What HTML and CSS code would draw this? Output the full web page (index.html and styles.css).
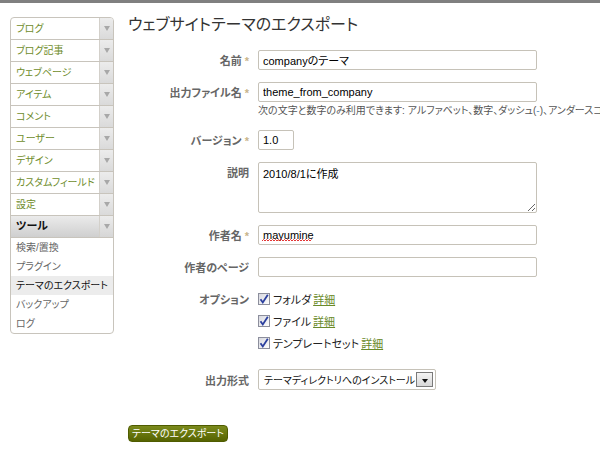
FILE: index.html
```html
<!DOCTYPE html>
<html lang="ja">
<head>
<meta charset="utf-8">
<title>ウェブサイトテーマのエクスポート</title>
<link rel="stylesheet" href="styles.css">
</head>
<body>
<div class="topbar"></div>
<div class="layout">
  <nav class="sidebar">
    <div class="nav-item"><span class="nav-label">ブログ</span><span class="nav-arrow"><i></i></span></div>
    <div class="nav-item"><span class="nav-label">ブログ記事</span><span class="nav-arrow"><i></i></span></div>
    <div class="nav-item"><span class="nav-label">ウェブページ</span><span class="nav-arrow"><i></i></span></div>
    <div class="nav-item"><span class="nav-label">アイテム</span><span class="nav-arrow"><i></i></span></div>
    <div class="nav-item"><span class="nav-label">コメント</span><span class="nav-arrow"><i></i></span></div>
    <div class="nav-item"><span class="nav-label">ユーザー</span><span class="nav-arrow"><i></i></span></div>
    <div class="nav-item"><span class="nav-label">デザイン</span><span class="nav-arrow"><i></i></span></div>
    <div class="nav-item"><span class="nav-label">カスタムフィールド</span><span class="nav-arrow"><i></i></span></div>
    <div class="nav-item"><span class="nav-label">設定</span><span class="nav-arrow"><i></i></span></div>
    <div class="nav-item active"><span class="nav-label">ツール</span><span class="nav-arrow"><i></i></span></div>
    <ul class="subnav">
      <li>検索/置換</li>
      <li>プラグイン</li>
      <li class="current">テーマのエクスポート</li>
      <li>バックアップ</li>
      <li>ログ</li>
    </ul>
  </nav>
  <main class="main">
    <h1 class="title">ウェブサイトテーマのエクスポート</h1>
    <form class="form">
      <div class="row">
        <label class="label">名前 <span class="req">*</span></label>
        <input class="field" type="text" value="companyのテーマ">
      </div>
      <div class="row">
        <label class="label">出力ファイル名 <span class="req">*</span></label>
        <input class="field" type="text" value="theme_from_company">
      </div>
      <div class="hint">次の文字と数字のみ利用できます: アルファベット、数字、ダッシュ(<span class="dash">-</span>)、アンダースコア(_)</div>
      <div class="row">
        <label class="label">バージョン <span class="req">*</span></label>
        <input class="field short" type="text" value="1.0">
      </div>
      <div class="row top">
        <label class="label pad">説明</label>
        <textarea class="field area">2010/8/1に作成</textarea>
      </div>
      <div class="row">
        <label class="label">作者名 <span class="req">*</span></label>
        <div class="field-wrap">
          <input class="field" type="text" value="mayumine">
          <svg class="spell-mark" width="50" height="3" viewBox="0 0 50 3"><polyline points="0,2 1.5,0.5 3,2 4.5,0.5 6,2 7.5,0.5 9,2 10.5,0.5 12,2 13.5,0.5 15,2 16.5,0.5 18,2 19.5,0.5 21,2 22.5,0.5 24,2 25.5,0.5 27,2 28.5,0.5 30,2 31.5,0.5 33,2 34.5,0.5 36,2 37.5,0.5 39,2 40.5,0.5 42,2 43.5,0.5 45,2 46.5,0.5 48,2 49.5,0.5" fill="none" stroke="#e02020" stroke-width="0.9"/></svg>
        </div>
      </div>
      <div class="row">
        <label class="label">作者のページ</label>
        <input class="field" type="text" value="">
      </div>
      <div class="row top">
        <label class="label optlabel">オプション</label>
        <div class="options">
          <div class="opt"><span class="cb"><svg viewBox="0 0 12 12" width="12" height="12"><path d="M2.5 6.2 L4.8 9.5 L9.8 1.8" fill="none" stroke="#2b3f9e" stroke-width="1.8"/></svg></span>フォルダ <a href="#" class="link">詳細</a></div>
          <div class="opt"><span class="cb"><svg viewBox="0 0 12 12" width="12" height="12"><path d="M2.5 6.2 L4.8 9.5 L9.8 1.8" fill="none" stroke="#2b3f9e" stroke-width="1.8"/></svg></span>ファイル <a href="#" class="link">詳細</a></div>
          <div class="opt"><span class="cb"><svg viewBox="0 0 12 12" width="12" height="12"><path d="M2.5 6.2 L4.8 9.5 L9.8 1.8" fill="none" stroke="#2b3f9e" stroke-width="1.8"/></svg></span>テンプレートセット <a href="#" class="link">詳細</a></div>
        </div>
      </div>
      <div class="row">
        <label class="label">出力形式</label>
        <div class="select"><span class="select-text">テーマディレクトリへのインストール</span><span class="select-btn"><i></i></span></div>
      </div>
      <div class="actions">
        <button type="button" class="btn">テーマのエクスポート</button>
      </div>
    </form>
  </main>
</div>
</body>
</html>
```
FILE: styles.css
```css
* { box-sizing: border-box; }
html, body { margin: 0; padding: 0; background: #fff; }
body {
  font-family: "Liberation Sans", "Noto Sans CJK JP", sans-serif;
  font-size: 11px;
  color: #333;
  font-feature-settings: "palt";
  overflow: hidden;
  width: 600px;
  height: 450px;
}
.topbar { height: 3px; background: #808080; }
.layout { display: flex; align-items: flex-start; padding-left: 10px; }

.sidebar {
  width: 104px;
  margin-top: 14px;
  border: 1px solid #c8c4bc;
  border-radius: 4px;
  overflow: hidden;
  flex: none;
}
.nav-item {
  display: flex;
  height: 22px;
  border-bottom: 1px solid #c8c4bc;
}
.nav-label {
  flex: 1;
  padding-left: 5px;
  line-height: 21px;
  color: #6f8d2c;
  font-size: 10px;
  white-space: nowrap;
  overflow: hidden;
}
.nav-arrow {
  width: 14px;
  flex: none;
  background: linear-gradient(#ececec, #dadada);
  border-left: 1px solid #d3d0ca;
  display: flex;
  align-items: center;
  justify-content: center;
}
.nav-arrow i {
  width: 0; height: 0;
  border-left: 3px solid transparent;
  border-right: 3px solid transparent;
  border-top: 5px solid #a8a8a8;
}
.nav-item.active { background: linear-gradient(#ebebeb, #cfcfcf); }
.nav-item.active .nav-label { color: #111; font-weight: bold; font-size: 11px; }
.nav-item.active .nav-arrow { background: linear-gradient(#ececec, #d6d6d6); }
.subnav { list-style: none; margin: 0; padding: 0; }
.subnav li {
  height: 19px;
  line-height: 19px;
  padding-left: 5px;
  color: #666;
  font-size: 10px;
  white-space: nowrap;
}
.subnav li.current { background: #ececec; color: #111; }

.main { margin-left: 14px; padding-top: 12px; flex: 1; min-width: 0; }
.title {
  margin: 0;
  font-size: 16px;
  line-height: 20px;
  font-weight: normal;
  color: #333;
}
.form { margin-top: 15px; display: flex; flex-direction: column; }
.row {
  display: grid;
  grid-template-columns: 121px 279px;
  column-gap: 9px;
  align-items: center;
  margin-bottom: 12px;
}
.row.top { align-items: start; }
.label {
  text-align: right;
  font-weight: bold;
  color: #666;
  font-size: 11px;
  white-space: nowrap;
}
.label.pad { padding-top: 2px; }
.label.optlabel { padding-top: 2px; }
.req { color: #c8b48a; font-weight: bold; }
.field {
  height: 20px;
  border: 1px solid #c6c2b8;
  border-radius: 2px;
  padding: 0 4px;
  font-family: "Liberation Sans", "Noto Sans CJK JP", sans-serif;
  font-size: 11px;
  color: #000;
  background: #fff;
  margin: 0;
  width: 279px;
  outline: none;
  font-feature-settings: "palt";
}
.field.short { width: 36px; }
.field.area { height: 51px; padding: 4px; resize: vertical; line-height: 14px; display: block; }
.field-wrap { position: relative; height: 20px; }
.field-wrap .field { display: block; }
.spell-mark { position: absolute; left: 4px; top: 14px; }
.hint {
  margin: -11px 0 12px 130px;
  line-height: 15px;
  color: #555;
  font-size: 10px;
  white-space: nowrap;
}
.dash { color: #5a8fc0; }
.options { display: flex; flex-direction: column; gap: 2px; margin-bottom: 4px; }
.opt { height: 20px; display: flex; align-items: center; font-size: 11px; color: #222; white-space: nowrap; }
.cb {
  width: 12px; height: 12px;
  border: 1px solid #8c8e9c;
  background: linear-gradient(135deg, #d8d9e0, #fdfdfd);
  margin-right: 3px;
  display: inline-flex;
  flex: none;
}
.cb svg { display: block; margin: -1px; }
.link { color: #6a8a2a; text-decoration: underline; margin-left: 2px; }
.select {
  width: 178px;
  height: 21px;
  border: 1px solid #c6c2b8;
  border-radius: 2px;
  display: flex;
  align-items: center;
  justify-content: space-between;
  padding: 0 2px 0 5px;
  color: #111;
  font-size: 10px;
}
.select-text { white-space: nowrap; }
.select-btn {
  width: 17px; height: 15px;
  border: 1px solid #7a7a7a;
  background: linear-gradient(#f4f4f4, #d8d8d8);
  display: flex; align-items: center; justify-content: center;
  flex: none;
}
.select-btn i {
  width: 0; height: 0;
  border-left: 3.5px solid transparent;
  border-right: 3.5px solid transparent;
  border-top: 4px solid #111;
  margin-top: 2px;
}
.actions { margin-top: 23px; }
.btn {
  height: 17px;
  width: 100px;
  padding: 0;
  border: 1px solid #4f5c00;
  border-radius: 4px;
  background: linear-gradient(#7b8a1c, #556300);
  color: #fff;
  font-family: "Liberation Sans", "Noto Sans CJK JP", sans-serif;
  font-size: 10px;
  line-height: 15px;
  font-feature-settings: "palt";
  white-space: nowrap;
}
```
